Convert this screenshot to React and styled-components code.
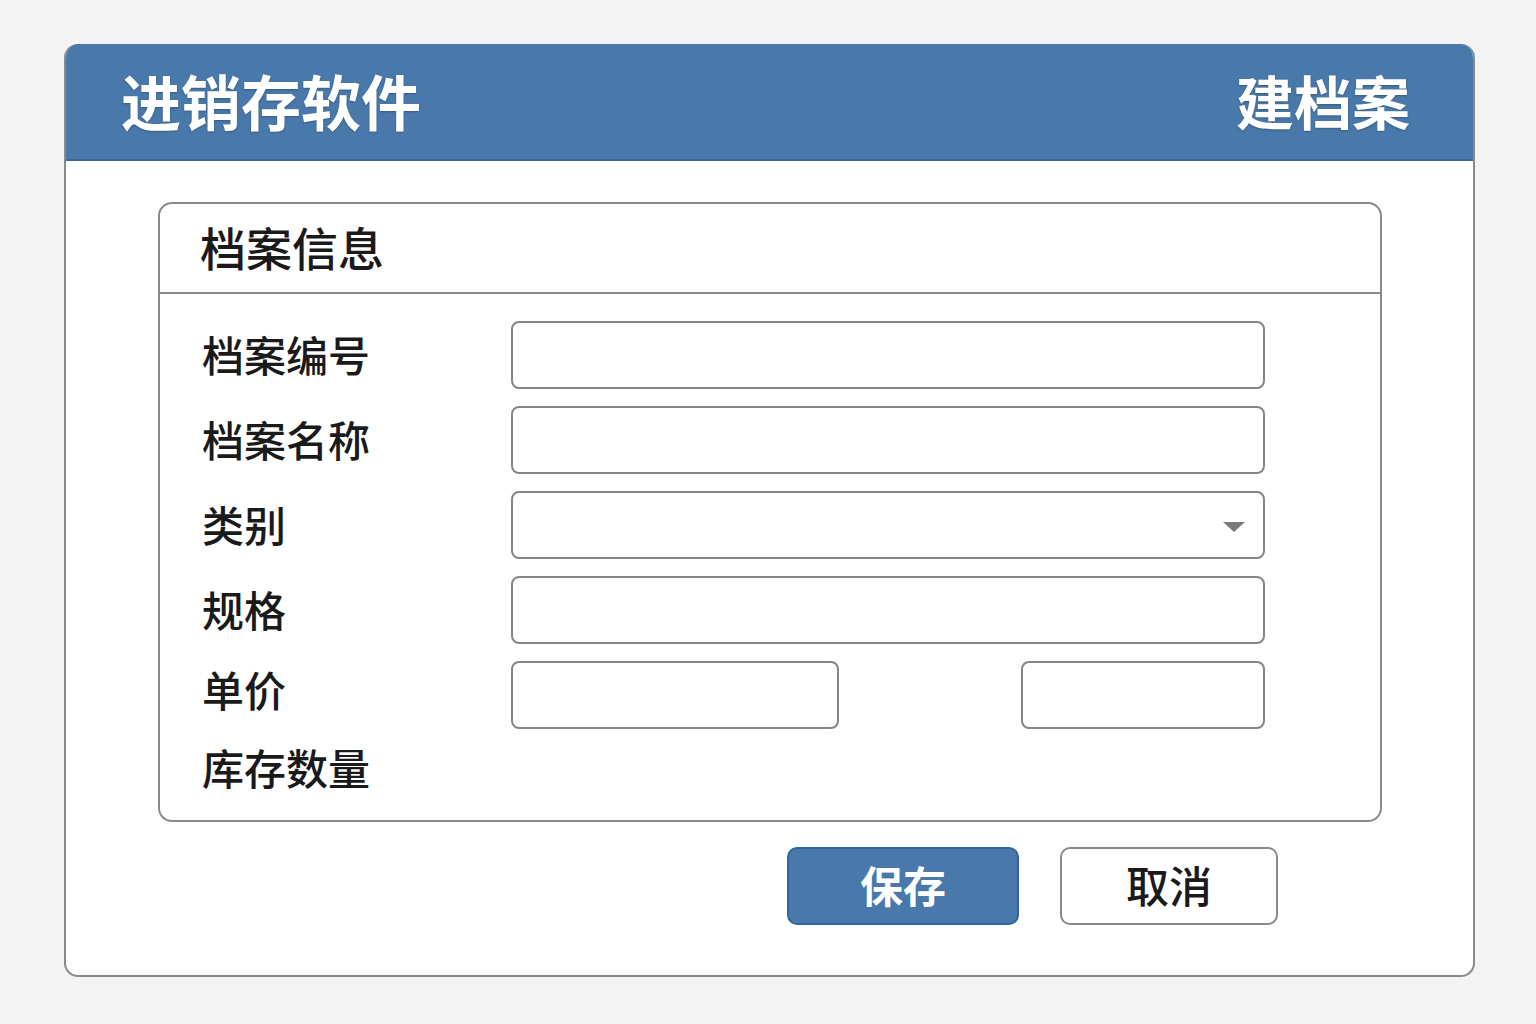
import React from 'react';
import styled, { createGlobalStyle } from 'styled-components';

const GlobalStyle = createGlobalStyle`
  html, body {
    margin: 0;
    padding: 0;
    background: #f3f3f3;
    font-family: "Noto Sans CJK SC", "Noto Sans", sans-serif;
  }
`;

const Page = styled.div`
  width: 1536px;
  height: 1024px;
  padding: 44px 61px 0 64px;
  box-sizing: border-box;
`;

const Window = styled.div`
  width: 1411px;
  height: 933px;
  box-sizing: border-box;
  background: #fff;
  border: 2px solid #8a8a8a;
  border-top: none;
  border-radius: 14px;
  overflow: hidden;
  display: flex;
  flex-direction: column;
`;

const TitleBar = styled.div`
  height: 117px;
  background: #4879aa;
  border-bottom: 2px solid #3a6a9c;
  box-sizing: border-box;
  display: flex;
  align-items: center;
  justify-content: space-between;
  padding: 0 63px 4px 55px;
  color: #fff;
  font-weight: 700;
  text-shadow: 0 1px 2px rgba(0, 0, 0, 0.25);
`;

const TitleText = styled.span`
  font-size: ${(p) => p.$size}px;
`;

const Body = styled.div`
  flex: 1;
  padding: 41px 91px 0 92px;
  display: flex;
  flex-direction: column;
`;

const Panel = styled.div`
  border: 2px solid #8a8a8a;
  border-radius: 14px;
  display: flex;
  flex-direction: column;
`;

const PanelHead = styled.div`
  height: 90px;
  box-sizing: border-box;
  border-bottom: 2px solid #8a8a8a;
  display: flex;
  align-items: center;
  padding: 0 0 4px 40px;
  font-size: 46px;
  font-weight: 500;
  color: #1a1a1a;
`;

const Form = styled.div`
  display: grid;
  grid-template-columns: 309px 1fr;
  grid-template-rows: repeat(5, 68px) 40px;
  row-gap: 17px;
  padding: 27px 115px 34px 42px;
`;

const Label = styled.div`
  font-size: 42px;
  font-weight: 500;
  color: #1a1a1a;
  display: flex;
  align-items: center;
  padding-bottom: ${(p) => p.$lift || 0}px;
`;

const LastLabel = styled(Label)`
  grid-column: 1 / 3;
`;

const Input = styled.div`
  position: relative;
  height: 68px;
  box-sizing: border-box;
  border: 2px solid #858585;
  border-radius: 8px;
  background: #fff;
  width: ${(p) => (p.$width ? `${p.$width}px` : 'auto')};
`;

const Caret = styled.span`
  position: absolute;
  right: 18px;
  top: 29px;
  width: 0;
  height: 0;
  border-left: 11px solid transparent;
  border-right: 11px solid transparent;
  border-top: 10px solid #7a7a7a;
`;

const PairRow = styled.div`
  display: flex;
  justify-content: space-between;
`;

const Actions = styled.div`
  display: flex;
  justify-content: flex-end;
  gap: 41px;
  padding: 25px 104px 0 0;
`;

const Button = styled.button`
  height: 78px;
  box-sizing: border-box;
  border-radius: 10px;
  font-family: inherit;
  font-size: 43px;
  padding: 0 0 4px;
  cursor: pointer;
  width: ${(p) => p.$width}px;
  background: ${(p) => (p.$primary ? '#4879aa' : '#fff')};
  color: ${(p) => (p.$primary ? '#fff' : '#1a1a1a')};
  border: 2px solid ${(p) => (p.$primary ? '#2f66a0' : '#8a8a8a')};
  font-weight: ${(p) => (p.$primary ? 700 : 500)};
`;

const fields = [
  { label: '档案编号' },
  { label: '档案名称' },
  { label: '类别', select: true },
  { label: '规格' },
];

export default function App() {
  return (
    <>
      <GlobalStyle />
      <Page>
        <Window>
          <TitleBar>
            <TitleText $size={60}>进销存软件</TitleText>
            <TitleText $size={58}>建档案</TitleText>
          </TitleBar>
          <Body>
            <Panel>
              <PanelHead>档案信息</PanelHead>
              <Form>
                {fields.map((f) => (
                  <React.Fragment key={f.label}>
                    <Label $lift={4}>{f.label}</Label>
                    <Input>{f.select && <Caret />}</Input>
                  </React.Fragment>
                ))}
                <Label $lift={14}>单价</Label>
                <PairRow>
                  <Input $width={328} />
                  <Input $width={244} />
                </PairRow>
                <LastLabel>库存数量</LastLabel>
              </Form>
            </Panel>
            <Actions>
              <Button $primary $width={232}>保存</Button>
              <Button $width={218}>取消</Button>
            </Actions>
          </Body>
        </Window>
      </Page>
    </>
  );
}
